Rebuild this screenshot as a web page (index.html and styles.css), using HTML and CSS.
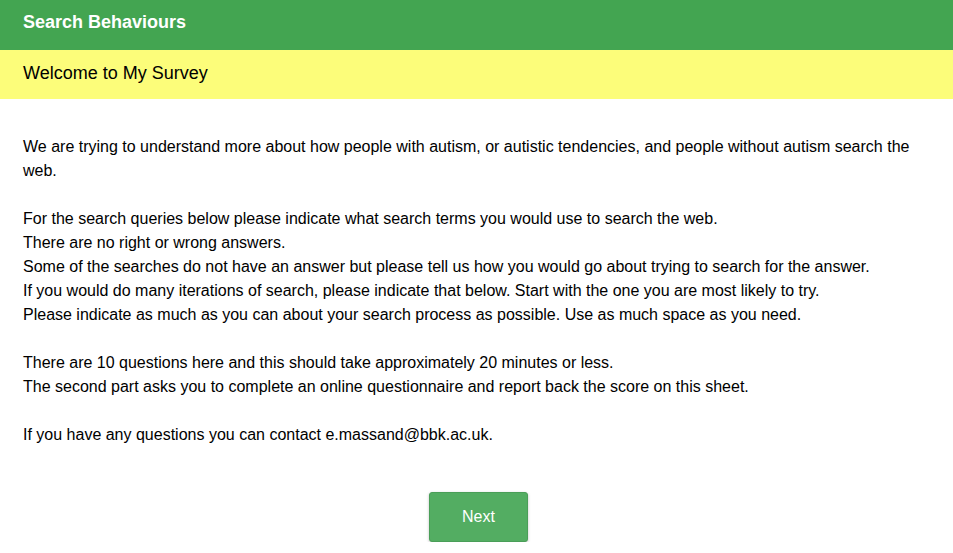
FILE: index.html
```html
<!DOCTYPE html>
<html>
<head>
<meta charset="utf-8">
<link rel="stylesheet" href="styles.css">
</head>
<body>
<header class="topbar">Search Behaviours</header>
<div class="welcome">Welcome to My Survey</div>
<main class="content">
<p>We are trying to understand more about how people with autism, or autistic tendencies, and people without autism search the web.</p>
<p>For the search queries below please indicate what search terms you would use to search the web.<br>
There are no right or wrong answers.<br>
Some of the searches do not have an answer but please tell us how you would go about trying to search for the answer.<br>
If you would do many iterations of search, please indicate that below. Start with the one you are most likely to try.<br>
Please indicate as much as you can about your search process as possible. Use as much space as you need.</p>
<p>There are 10 questions here and this should take approximately 20 minutes or less.<br>
The second part asks you to complete an online questionnaire and report back the score on this sheet.</p>
<p>If you have any questions you can contact e.massand@bbk.ac.uk.</p>
</main>
<div class="actions"><button class="next">Next</button></div>
</body>
</html>
```
FILE: styles.css
```css
html, body {
  margin: 0;
  padding: 0;
  background: #fff;
  font-family: "Liberation Sans", Arial, sans-serif;
  color: #000;
}
.topbar {
  height: 50px;
  box-sizing: border-box;
  background: #43a551;
  color: #fff;
  font-weight: bold;
  font-size: 18px;
  padding: 0 23px;
  display: flex;
  align-items: center;
  padding-bottom: 5px;
}
.welcome {
  height: 49px;
  box-sizing: border-box;
  background: #fcfd7a;
  font-size: 18px;
  padding: 0 23px;
  display: flex;
  align-items: center;
  padding-bottom: 2px;
}
.content {
  padding: 36px 23px 0;
  font-size: 16px;
  line-height: 24px;
}
.content p {
  margin: 0 0 24px;
}
.actions {
  display: flex;
  justify-content: center;
  padding-top: 21px;
  padding-left: 4px;
}
.next {
  width: 99px;
  height: 50px;
  background: #53ad62;
  color: #fff;
  border: 1px solid #4a9e58;
  border-radius: 3px;
  font-family: "Liberation Sans", Arial, sans-serif;
  font-size: 16px;
  box-shadow: 0 1px 3px rgba(0,0,0,0.25);
}
```
